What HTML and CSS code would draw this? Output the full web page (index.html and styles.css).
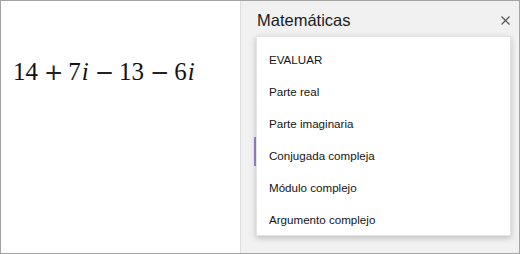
FILE: index.html
```html
<!DOCTYPE html>
<html lang="es">
<head>
<meta charset="utf-8">
<title>Matemáticas</title>
<link rel="stylesheet" href="styles.css">
</head>
<body>
<div class="frame">
  <div class="canvas">
    <div class="expr"><span class="num">14</span><span class="op">+</span><span class="num">7</span><span class="var">i</span><span class="op">−</span><span class="num">13</span><span class="op">−</span><span class="num">6</span><span class="var">i</span></div>
  </div>
  <div class="pane">
    <div class="pane-head">
      <span class="pane-title">Matemáticas</span>
      <svg class="close" width="9" height="9" viewBox="0 0 9 9"><path d="M0.5 0.5 L8.5 8.5 M8.5 0.5 L0.5 8.5" stroke="#555" stroke-width="1.1" fill="none"/></svg>
    </div>
    <div class="focus-bar"></div>
    <ul class="menu">
      <li class="menu-item">EVALUAR</li>
      <li class="menu-item">Parte real</li>
      <li class="menu-item">Parte imaginaria</li>
      <li class="menu-item">Conjugada compleja</li>
      <li class="menu-item">Módulo complejo</li>
      <li class="menu-item">Argumento complejo</li>
    </ul>
  </div>
</div>
</body>
</html>
```
FILE: styles.css
```css
html, body {
  margin: 0;
  padding: 0;
  background: #ffffff;
}
.frame {
  width: 520px;
  height: 254px;
  box-sizing: border-box;
  border: 1px solid #a3a3a3;
  display: flex;
  overflow: hidden;
}
.canvas {
  width: 239px;
  flex: none;
  background: #ffffff;
  border-right: 1px solid #dedede;
}
.expr {
  padding: 56px 0 0 12px;
  font-family: "Liberation Serif", serif;
  font-size: 25px;
  line-height: 30px;
  color: #111;
  white-space: nowrap;
}
.var { font-style: italic; margin-left: 1px; }
.op {
  font-family: "DejaVu Sans", sans-serif;
  font-size: 23px;
  line-height: 30px;
  margin: 0 5px 0 6px;
  color: #222;
}
.pane {
  flex: 1;
  background: #f1f1f1;
  position: relative;
}
.pane-head {
  display: flex;
  justify-content: space-between;
  align-items: center;
  padding: 9px 9px 0 16px;
  height: 20px;
}
.pane-title {
  font-family: "Liberation Sans", Arial, sans-serif;
  font-size: 16.5px;
  line-height: 20px;
  color: #1b1b1b;
}
.close {
  display: block;
}
.focus-bar {
  position: absolute;
  left: 13px;
  top: 136px;
  width: 2px;
  height: 29px;
  background: #9d83cc;
}
.menu {
  position: absolute;
  left: 15px;
  top: 35px;
  width: 255px;
  height: 200px;
  box-sizing: border-box;
  margin: 0;
  padding: 6px 0 0 0;
  list-style: none;
  background: #ffffff;
  border: 1px solid #e4e4e4;
  box-shadow: 0 2px 6px rgba(0, 0, 0, 0.22);
}
.menu-item {
  height: 32px;
  display: flex;
  align-items: center;
  padding-left: 12px;
  font-family: "Liberation Sans", Arial, sans-serif;
  font-size: 11.6px;
  color: #141414;
}
```
